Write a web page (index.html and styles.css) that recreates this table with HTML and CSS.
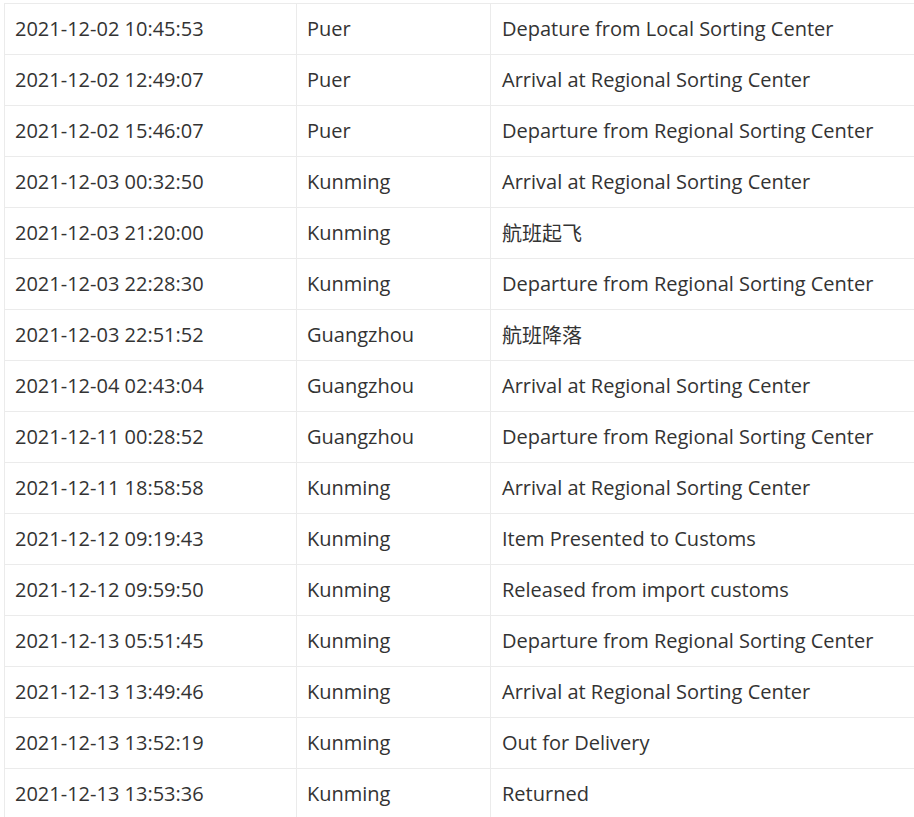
FILE: index.html
```html
<!DOCTYPE html>
<html lang="en">
<head>
<meta charset="utf-8">
<title>Tracking</title>
<link rel="stylesheet" href="styles.css">
</head>
<body>
<div class="wrap">
<table class="track">
<colgroup><col class="c1"><col class="c2"><col class="c3"></colgroup>
<tbody>
<tr><td>2021-12-02 10:45:53</td><td>Puer</td><td>Depature from Local Sorting Center</td></tr>
<tr><td>2021-12-02 12:49:07</td><td>Puer</td><td>Arrival at Regional Sorting Center</td></tr>
<tr><td>2021-12-02 15:46:07</td><td>Puer</td><td>Departure from Regional Sorting Center</td></tr>
<tr><td>2021-12-03 00:32:50</td><td>Kunming</td><td>Arrival at Regional Sorting Center</td></tr>
<tr><td>2021-12-03 21:20:00</td><td>Kunming</td><td class="cjk">航班起飞</td></tr>
<tr><td>2021-12-03 22:28:30</td><td>Kunming</td><td>Departure from Regional Sorting Center</td></tr>
<tr><td>2021-12-03 22:51:52</td><td>Guangzhou</td><td class="cjk">航班降落</td></tr>
<tr><td>2021-12-04 02:43:04</td><td>Guangzhou</td><td>Arrival at Regional Sorting Center</td></tr>
<tr><td>2021-12-11 00:28:52</td><td>Guangzhou</td><td>Departure from Regional Sorting Center</td></tr>
<tr><td>2021-12-11 18:58:58</td><td>Kunming</td><td>Arrival at Regional Sorting Center</td></tr>
<tr><td>2021-12-12 09:19:43</td><td>Kunming</td><td>Item Presented to Customs</td></tr>
<tr><td>2021-12-12 09:59:50</td><td>Kunming</td><td>Released from import customs</td></tr>
<tr><td>2021-12-13 05:51:45</td><td>Kunming</td><td>Departure from Regional Sorting Center</td></tr>
<tr><td>2021-12-13 13:49:46</td><td>Kunming</td><td>Arrival at Regional Sorting Center</td></tr>
<tr><td>2021-12-13 13:52:19</td><td>Kunming</td><td>Out for Delivery</td></tr>
<tr><td>2021-12-13 13:53:36</td><td>Kunming</td><td>Returned</td></tr>
</tbody>
</table>
</div>
</body>
</html>
```

FILE: styles.css
```css
html, body {
  margin: 0;
  padding: 0;
  background: #fff;
}
body {
  overflow: hidden;
}
.wrap {
  padding: 3px 0 0 4px;
}
.track {
  border-collapse: collapse;
  table-layout: fixed;
  width: 910px;
  font-family: "Open Sans", "Noto Sans CJK SC", sans-serif;
  font-size: 20px;
  color: #333;
}
.c1 { width: 292px; }
.c2 { width: 194px; }
.track td {
  height: 51px;
  box-sizing: border-box;
  padding: 0 10px;
  border: 1px solid #ebebeb;
  vertical-align: middle;
  white-space: nowrap;
  line-height: 26px;
}
.track td:last-child {
  border-right: none;
  padding-left: 11px;
}
.cjk {
  font-family: "Noto Sans CJK SC", sans-serif;
}
```
